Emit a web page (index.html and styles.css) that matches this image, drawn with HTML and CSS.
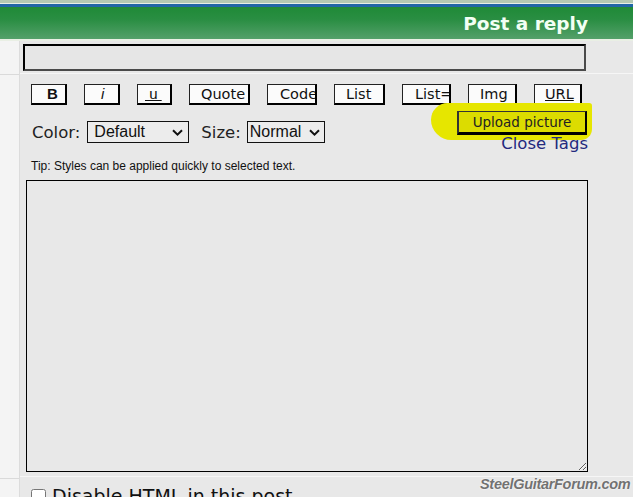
FILE: index.html
```html
<!DOCTYPE html>
<html>
<head>
<meta charset="utf-8">
<link rel="stylesheet" href="styles.css">
</head>
<body>
<div class="topline"></div>
<div class="blueline"></div>
<header class="titlebar"><h1>Post a reply</h1></header>
<div class="titlegap"></div>
<div class="layout">
  <aside class="gutter">
    <div class="g-subject"></div>
    <div class="g-editor"></div>
    <div class="g-options"></div>
  </aside>
  <main class="form">
    <div class="subject-row">
      <input class="subject" type="text">
    </div>
    <div class="editor-row">
      <div class="toolbar">
        <button class="tb tb-b">B</button>
        <button class="tb tb-i">i</button>
        <button class="tb tb-u"><span>&nbsp;u&nbsp;</span></button>
        <button class="tb tb-quote">Quote</button>
        <button class="tb tb-code">Code</button>
        <button class="tb tb-list">List</button>
        <button class="tb tb-listeq">List=</button>
        <button class="tb tb-img">Img</button>
        <button class="tb tb-url"><span class="ul">URL</span></button>
      </div>
      <div class="format-row">
        <div class="fmt">
          <span class="lbl">Color:</span>
          <div class="sel sel-color"><span>Default</span><svg width="11" height="7" viewBox="0 0 11 7"><path d="M1 1.2 L5.5 5.6 L10 1.2" fill="none" stroke="#111" stroke-width="2"/></svg></div>
          <span class="lbl lbl-size">Size:</span>
          <div class="sel sel-size"><span>Normal</span><svg width="11" height="7" viewBox="0 0 11 7"><path d="M1 1.2 L5.5 5.6 L10 1.2" fill="none" stroke="#111" stroke-width="2"/></svg></div>
        </div>
        <div class="tools">
          <div class="hl"><button class="upload">Upload picture</button></div>
          <a class="close-tags">Close Tags</a>
        </div>
      </div>
      <p class="tip">Tip: Styles can be applied quickly to selected text.</p>
      <textarea class="message"></textarea>
    </div>
    <div class="options-row">
      <label class="opt"><input type="checkbox"> Disable HTML in this post</label>
    </div>
  </main>
</div>
<div class="watermark">SteelGuitarForum.com</div>
</body>
</html>
```
FILE: styles.css
```css
html, body {
  margin: 0;
  padding: 0;
  width: 633px;
  height: 497px;
  overflow: hidden;
  background: #e8e8e8;
  font-family: "DejaVu Sans", Verdana, sans-serif;
  position: relative;
}
.topline { height: 3px; background: #b3c9b3; border-bottom: 1px solid #e6efe6; }
.blueline { height: 3px; background: #1f66a6; }
.titlebar {
  height: 32px;
  background: linear-gradient(to bottom, #1f8a37 0%, #2a8e43 40%, #54a06a 100%);
  display: flex;
  align-items: center;
  justify-content: flex-end;
  padding-right: 45px;
}
.titlebar h1 {
  margin: 0;
  font-size: 18.5px;
  font-weight: bold;
  color: #f2fff4;
  padding-top: 1px;
}
.titlegap { height: 2px; background: #e9efe4; }
.layout { display: flex; }
.gutter {
  width: 19px;
  background: #f4f4f4;
  border-right: 1px solid #dcdcdc;
  display: flex;
  flex-direction: column;
}
.g-subject { height: 33px; border-bottom: 1px solid #dadada; }
.g-editor { height: 403px; border-bottom: 1px solid #dadada; }
.g-options { flex: 1; }
.form { flex: 1; background: #e8e8e8; }

.subject-row {
  height: 33px;
  padding: 3px 0 0 3px;
  box-sizing: border-box;
  border-bottom: 1px solid #f6f6f6;
}
.subject {
  display: block;
  width: 563px;
  height: 27px;
  box-sizing: border-box;
  margin: 0;
  background: #e6e6e6;
  border-style: solid;
  border-width: 2px;
  border-color: #000 #4a4a4a #4a4a4a #000;
  outline: none;
}

.editor-row {
  height: 403px;
  box-sizing: border-box;
  padding: 10px 0 0 6px;
  border-bottom: 1px solid #f6f6f6;
}
.toolbar {
  display: flex;
  justify-content: space-between;
  width: 551px;
  padding-left: 5px;
}
.tb {
  height: 21px;
  box-sizing: border-box;
  margin: 0;
  padding: 0 0 0 12px;
  background: #fbfbfb;
  border-style: solid;
  border-width: 1px 2px 2px 1px;
  border-color: #222 #000 #000 #222;
  font-family: "DejaVu Sans", Verdana, sans-serif;
  font-size: 14.5px;
  color: #111;
  text-align: left;
  overflow: hidden;
  white-space: nowrap;
  line-height: 18px;
}
.tb-b { width: 36px; font-family: "Liberation Sans", Arial, sans-serif; font-weight: bold; font-size: 15px; padding-left: 15px; }
.tb-i { width: 36px; font-family: "Liberation Sans", Arial, sans-serif; font-style: italic; font-size: 15px; padding-left: 16px; }
.tb-u { width: 35px; font-family: "Liberation Sans", Arial, sans-serif; font-size: 15px; padding-left: 7px; }
.tb-u span { text-decoration: underline; }
.tb-quote { width: 61px; padding-left: 11px; }
.tb-code { width: 50px; padding-left: 12px; }
.tb-list { width: 51px; padding-left: 11px; }
.tb-listeq { width: 49px; padding-left: 12px; }
.tb-img { width: 49px; padding-left: 11px; }
.tb-url { width: 48px; padding-left: 10px; }
.ul { text-decoration: underline; }

.format-row {
  display: flex;
  justify-content: space-between;
  align-items: center;
  width: 562px;
  margin-top: 6px;
}
.fmt { display: flex; align-items: center; padding-left: 6px; }
.lbl { font-size: 16.5px; color: #222; }
.lbl-size { margin-left: 12px; }
.sel {
  height: 22px;
  box-sizing: border-box;
  border: 1px solid #111;
  background: #ececec;
  display: flex;
  align-items: center;
  justify-content: space-between;
  font-family: "Liberation Sans", Arial, sans-serif;
  font-size: 16px;
  color: #111;
}
.sel-color { width: 102px; margin-left: 7px; padding: 0 5px 0 6px; }
.sel-size { width: 78px; margin-left: 6px; padding: 0 4px 0 2px; }

.tools {
  display: flex;
  flex-direction: column;
  align-items: flex-end;
}
.hl { position: relative; }
.hl::before {
  content: "";
  position: absolute;
  left: -26px;
  top: -8px;
  right: -4px;
  bottom: -5px;
  background: #e6e600;
  border-radius: 18px 3px 12px 22px;
  z-index: 0;
}
.upload {
  position: relative;
  z-index: 1;
  display: block;
  width: 130px;
  height: 24px;
  box-sizing: border-box;
  margin: 0 1px 0 0;
  padding: 0;
  background: #dcdc00;
  border-style: solid;
  border-width: 1px 2px 3px 2px;
  border-color: #333 #000 #000 #333;
  font-family: "DejaVu Sans", Verdana, sans-serif;
  font-size: 13.5px;
  color: #222;
}
.close-tags {
  font-size: 16.5px;
  color: #232a7e;
  line-height: 18px;
  margin-top: 0;
  position: relative;
  z-index: 1;
}

.tip {
  margin: 6px 0 0 5px;
  font-family: "Liberation Sans", Arial, sans-serif;
  font-size: 12px;
  line-height: 14px;
  color: #111;
}
.message {
  display: block;
  margin: 7px 0 0 0;
  width: 562px;
  height: 292px;
  box-sizing: border-box;
  background: #e8e8e8;
  border: 1px solid #000;
  outline: none;
}

.options-row { padding: 8px 0 0 11px; }
.opt {
  display: flex;
  align-items: center;
  font-size: 19px;
  color: #111;
  gap: 6px;
}
.opt input { margin: 0; width: 15px; height: 15px; }

.watermark {
  position: absolute;
  left: 480px;
  top: 476px;
  font-family: "Liberation Sans", Arial, sans-serif;
  font-weight: bold;
  font-style: italic;
  font-size: 14.5px;
  color: #727272;
  letter-spacing: -0.3px;
  text-shadow: 0 0 2px #fff, 0 0 1px #fff;
}
```
